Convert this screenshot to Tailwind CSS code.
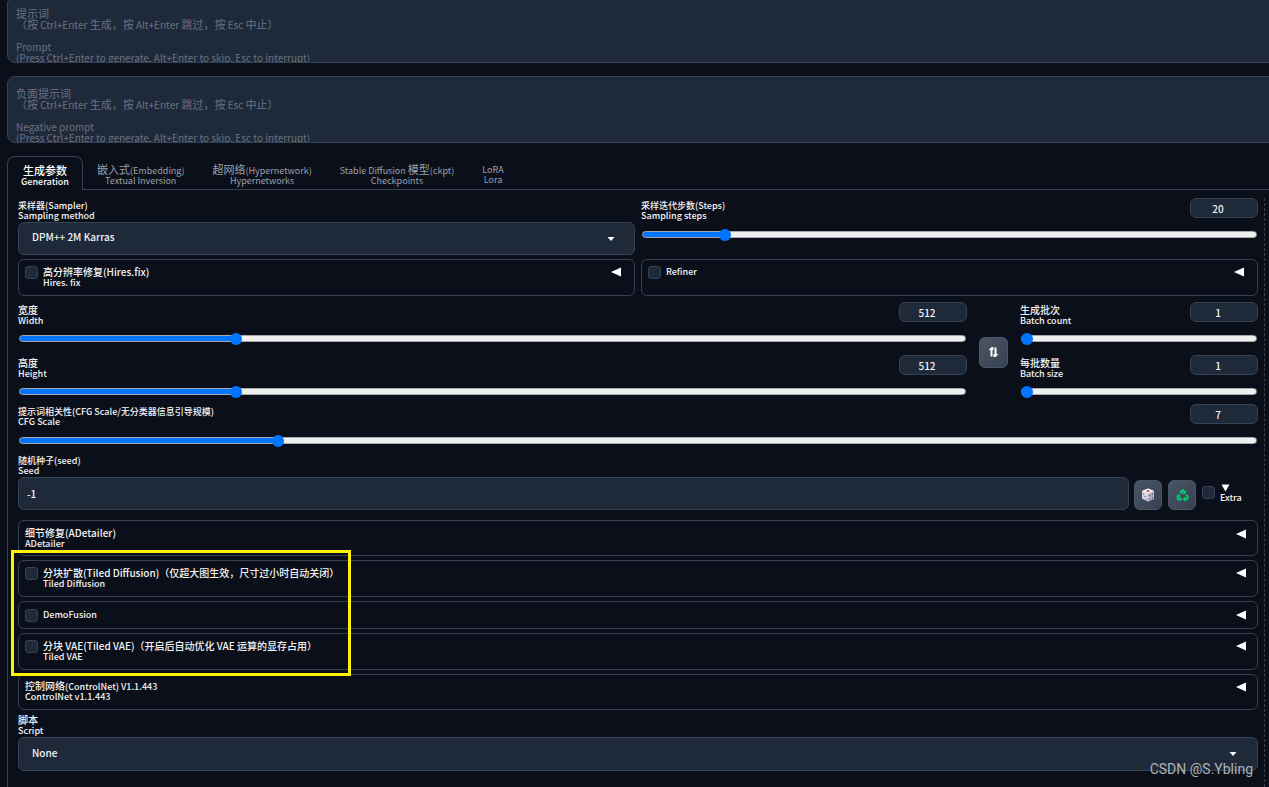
<!DOCTYPE html>
<html lang="zh-CN">
<head>
<meta charset="utf-8">
<title>Stable Diffusion</title>
<script src="https://cdn.jsdelivr.net/npm/@tailwindcss/browser@4"></script>
</head>
<body class="relative min-h-screen overflow-hidden bg-[#0b0f19] font-['Noto_Sans_CJK_SC',sans-serif] text-[9px] leading-[10px] font-medium text-gray-100">
<div class="flex min-h-screen flex-col pl-[7px]">

  <section class="-mt-1 -mr-2 flex flex-col gap-[13px]">
    <div class="relative h-[67px] overflow-hidden rounded-lg border border-gray-700 bg-gray-800">
      <textarea id="prompt" class="block size-full resize-none bg-transparent px-2 pt-[11px] text-[11px] leading-[11px]"></textarea>
      <label for="prompt" class="pointer-events-none absolute inset-x-2 top-[11px] text-[10px] leading-[11px] font-normal text-gray-500 [&_span]:text-[11px]">
        <span>提示词</span><br><span>（按</span> Ctrl+Enter <span>生成，按</span> Alt+Enter <span>跳过，按</span> Esc <span>中止）</span><br><br>Prompt<br>(Press Ctrl+Enter to generate, Alt+Enter to skip, Esc to interrupt)
      </label>
    </div>
    <div class="relative h-[67px] overflow-hidden rounded-lg border border-gray-700 bg-gray-800">
      <textarea id="negative" class="block size-full resize-none bg-transparent px-2 pt-[11px] text-[11px] leading-[11px]"></textarea>
      <label for="negative" class="pointer-events-none absolute inset-x-2 top-[11px] text-[10px] leading-[11px] font-normal text-gray-500 [&_span]:text-[11px]">
        <span>负面提示词</span><br><span>（按</span> Ctrl+Enter <span>生成，按</span> Alt+Enter <span>跳过，按</span> Esc <span>中止）</span><br><br>Negative prompt<br>(Press Ctrl+Enter to generate, Alt+Enter to skip, Esc to interrupt)
      </label>
    </div>
  </section>

  <nav class="mt-[13px] flex h-[34px] font-normal text-gray-400 [&_span]:text-[11px]">
    <button class="w-[76px] rounded-t-lg border border-b-0 border-gray-700 pt-1 text-center font-medium text-white"><span>生成参数</span><br>Generation</button>
    <button class="border-b border-gray-700 px-[14px] pt-[5px] text-center"><span>嵌入式</span>(Embedding)<br>Textual Inversion</button>
    <button class="border-b border-gray-700 px-[14px] pt-[5px] text-center"><span>超网络</span>(Hypernetwork)<br>Hypernetworks</button>
    <button class="border-b border-gray-700 px-[14px] pt-[5px] text-center">Stable Diffusion <span>模型</span>(ckpt)<br>Checkpoints</button>
    <button class="border-b border-gray-700 px-[14px] pt-[5px] text-center">LoRA<br>Lora</button>
    <div class="flex-1 border-b border-gray-700"></div>
  </nav>

  <main class="flex flex-1 border-l border-gray-700 pt-2 pr-1 pl-[10px] [&_input::-webkit-slider-runnable-track]:h-[7px] [&_input::-webkit-slider-runnable-track]:rounded-full [&_input::-webkit-slider-runnable-track]:border [&_input::-webkit-slider-runnable-track]:border-[#a5a7aa] [&_input::-webkit-slider-runnable-track]:bg-[linear-gradient(to_right,#0075ff_var(--fill),#efefef_var(--fill))] [&_input::-webkit-slider-thumb]:-mt-[3px] [&_input::-webkit-slider-thumb]:-ml-px [&_input::-webkit-slider-thumb]:size-3 [&_input::-webkit-slider-thumb]:appearance-none [&_input::-webkit-slider-thumb]:rounded-full [&_input::-webkit-slider-thumb]:bg-[#0075ff]">
    <div class="min-w-0 flex-1 border-r border-dashed border-gray-700 pr-[6px]">

      <div class="grid grid-cols-2 gap-x-[6px] gap-y-1">
        <div>
          <label for="sampler" class="mb-[1px] block pt-[3px]">采样器(Sampler)<br>Sampling method</label>
          <div class="relative">
            <select id="sampler" class="h-[33px] w-full appearance-none rounded-md border border-gray-700 bg-gray-800 px-[13px] pb-1 text-[10px]"><option>DPM++ 2M Karras</option></select>
            <svg class="pointer-events-none absolute top-[15px] right-5 h-1 w-2" viewBox="0 0 8 4" fill="#fff"><path d="M0.5 0h7L4 4z"/></svg>
          </div>
        </div>
        <div class="flex flex-col gap-[10px]">
          <div class="flex h-5 items-start justify-between">
            <label for="steps" class="pt-[3px]">采样迭代步数(Steps)<br>Sampling steps</label>
            <input aria-label="Sampling steps value" value="20" class="h-5 w-[68px] rounded-md border border-gray-700 bg-gray-800 pr-3 text-center text-[10px]">
          </div>
          <input id="steps" type="range" min="1" max="150" value="20" class="h-3 w-full appearance-none bg-transparent px-px" style="--fill:13.5%">
        </div>
        <details class="rounded-md border border-gray-700">
          <summary class="flex min-h-[35px] list-none items-start px-[6px] pt-[7px]">
            <input id="hires" type="checkbox" class="mr-[5px] -mt-px size-[13px] appearance-none rounded-[3px] border border-gray-700 bg-gray-800">
            <label for="hires" class="flex-1"><span class="text-[10px]">高分辨率修复(Hires.fix)</span><br>Hires. fix</label>
            <svg class="mr-[7px] h-[10px] w-[10px]" viewBox="0 0 10 10" fill="#fff"><path d="M0 5L10 0.5v9z"/></svg>
          </summary>
        </details>
        <details class="rounded-md border border-gray-700">
          <summary class="flex min-h-[35px] list-none items-start px-[6px] pt-[7px]">
            <input id="refiner" type="checkbox" class="mr-[5px] -mt-px size-[13px] appearance-none rounded-[3px] border border-gray-700 bg-gray-800">
            <label for="refiner" class="flex-1">Refiner</label>
            <svg class="mr-[7px] h-[10px] w-[10px]" viewBox="0 0 10 10" fill="#fff"><path d="M0 5L10 0.5v9z"/></svg>
          </summary>
        </details>
      </div>

      <div class="mt-[6px] flex items-center gap-3">
        <div class="flex flex-1 flex-col gap-[11px]">
          <div class="flex flex-col gap-[10px]">
            <div class="flex h-5 items-start justify-between">
              <label for="width" class="pt-[3px]"><span class="text-[10px]">宽度</span><br>Width</label>
              <input aria-label="Width value" value="512" class="h-5 w-[68px] rounded-md border border-gray-700 bg-gray-800 pr-3 text-center text-[10px]">
            </div>
            <input id="width" type="range" min="64" max="2048" value="512" class="h-3 w-full appearance-none bg-transparent px-px" style="--fill:23%">
          </div>
          <div class="flex flex-col gap-[10px]">
            <div class="flex h-5 items-start justify-between">
              <label for="height" class="pt-[3px]"><span class="text-[10px]">高度</span><br>Height</label>
              <input aria-label="Height value" value="512" class="h-5 w-[68px] rounded-md border border-gray-700 bg-gray-800 pr-3 text-center text-[10px]">
            </div>
            <input id="height" type="range" min="64" max="2048" value="512" class="h-3 w-full appearance-none bg-transparent px-px" style="--fill:23%">
          </div>
        </div>
        <button aria-label="交换宽高" class="mt-[5px] flex h-[31px] w-[29px] items-center justify-center rounded-md border border-gray-600 bg-linear-to-br from-gray-600 to-gray-700">
          <svg class="h-[10px] w-[11px]" viewBox="0 0 11 10" fill="none" stroke="#fff" stroke-width="2"><path d="M3.500 9.500V1.500M7.500 .5V8.500"/><path d="M.5 3L3.500 0H5.500V3zM5.500 7V10H7.500L10.500 7z" fill="#fff" stroke="none"/></svg>
        </button>
        <div class="flex w-[238px] flex-col gap-[11px]">
          <div class="flex flex-col gap-[10px]">
            <div class="flex h-5 items-start justify-between">
              <label for="count" class="pt-[3px]"><span class="text-[10px]">生成批次</span><br>Batch count</label>
              <input aria-label="Batch count value" value="1" class="h-5 w-[68px] rounded-md border border-gray-700 bg-gray-800 pr-3 text-center text-[10px]">
            </div>
            <input id="count" type="range" min="1" max="100" value="1" class="h-3 w-full appearance-none bg-transparent px-px" style="--fill:2%">
          </div>
          <div class="flex flex-col gap-[10px]">
            <div class="flex h-5 items-start justify-between">
              <label for="size" class="pt-[3px]"><span class="text-[10px]">每批数量</span><br>Batch size</label>
              <input aria-label="Batch size value" value="1" class="h-5 w-[68px] rounded-md border border-gray-700 bg-gray-800 pr-3 text-center text-[10px]">
            </div>
            <input id="size" type="range" min="1" max="8" value="1" class="h-3 w-full appearance-none bg-transparent px-px" style="--fill:2%">
          </div>
        </div>
      </div>

      <div class="mt-[7px] flex flex-col gap-[10px]">
        <div class="flex h-5 items-start justify-between">
          <label for="cfg" class="pt-[3px]">提示词相关性(CFG Scale/无分类器信息引导规模)<br>CFG Scale</label>
          <input aria-label="CFG Scale value" value="7" class="h-5 w-[68px] rounded-md border border-gray-700 bg-gray-800 pr-3 text-center text-[10px]">
        </div>
        <input id="cfg" type="range" min="1" max="30" step="0.5" value="7" class="h-3 w-full appearance-none bg-transparent px-px" style="--fill:21%">
      </div>

      <label for="seed" class="mt-[10px] block">随机种子(seed)<br>Seed</label>
      <div class="mt-px flex h-[33px] items-end">
        <input id="seed" value="-1" class="mr-[5px] h-full min-w-0 flex-1 rounded-md border border-gray-700 bg-gray-800 px-2 text-[10px]">
        <button aria-label="随机种子" class="mr-[6px] flex h-[30px] w-7 items-center justify-center rounded-md border border-gray-600 bg-linear-to-br from-gray-600 to-gray-700">
          <svg class="size-[14px]" viewBox="0 0 14 14"><path d="M7 .5L13 3v7.500L7 13.500 1 10.500V3z" fill="#d9d4e0"/><path d="M7 .5L13 3 7 5.800 1 3z" fill="#f7f4f8"/><path d="M7 5.800L13 3v7.500L7 13.500z" fill="#b6afc4"/><ellipse cx="7" cy="3" rx="1.700" ry=".9" fill="#d8434e"/><g fill="#39304d"><circle cx="2.600" cy="6" r=".6"/><circle cx="4" cy="8.500" r=".6"/><circle cx="5.500" cy="11" r=".6"/><circle cx="8.700" cy="7.500" r=".6"/><circle cx="11.500" cy="6" r=".6"/><circle cx="8.700" cy="11" r=".6"/><circle cx="11.500" cy="9.500" r=".6"/></g></svg>
        </button>
        <button aria-label="重用种子" class="mr-[6px] flex h-[30px] w-7 items-center justify-center rounded-md border border-gray-600 bg-linear-to-br from-gray-600 to-gray-700">
          <svg class="size-[13px]" viewBox="0 0 14 14" fill="#00cc6a"><path d="M3.700 4.200L5.400 1.200Q5.900.5 6.700.5H8.500L6 5.500z"/><path d="M7.600.5H8.200Q8.900.5 9.300 1.200L10.200 2.800 11.300 2.200 9.900 5.700 6.500 5 7.700 4.300z"/><path d="M10.200 6.800L12.200 5.700 13.700 8.400Q14 9.200 13.600 9.900L12.700 11.400z"/><path d="M12.300 11.900Q11.900 12.500 11.200 12.500H9.600V13.800L7.200 11 9.600 8.200V9.500H11.500z"/><path d="M6.200 9.500V12.500H2.700Q1.800 12.500 1.400 11.800L.9 10.900 1.800 9.500z"/><path d="M.6 10.200Q.1 9.500.5 8.600L1.400 7 .3 6.300 3.800 5.700 5 9 3.900 8.400 3.100 9.800z"/></svg>
        </button>
        <div class="flex w-14 self-center pb-[2px]">
          <input id="extra" type="checkbox" class="mt-[3px] mr-[5px] size-[13px] appearance-none rounded-[3px] border border-gray-700 bg-gray-800">
          <label for="extra"><svg class="mt-px mb-px ml-px h-[8px] w-[9px]" viewBox="0 0 9 8" fill="#fff"><path d="M.5 .5h8L4.500 7.500z"/></svg>Extra</label>
        </div>
      </div>

      <div class="mt-[10px] flex flex-col gap-1">
        <details class="rounded-md border border-gray-700">
          <summary class="flex min-h-[34px] list-none items-start px-[6px] pt-[7px]">
            <span class="flex-1"><span class="text-[10px]">细节修复(ADetailer)</span><br>ADetailer</span>
            <svg class="mt-px mr-[5px] h-[10px] w-[10px]" viewBox="0 0 10 10" fill="#fff"><path d="M0 5L10 0.5v9z"/></svg>
          </summary>
        </details>
        <div class="relative flex flex-col gap-1">
          <details class="rounded-md border border-gray-700">
            <summary class="flex min-h-[35px] list-none items-start px-[6px] pt-[7px]">
              <input id="tdiff" type="checkbox" class="mr-[5px] -mt-px size-[13px] appearance-none rounded-[3px] border border-gray-700 bg-gray-800">
              <label for="tdiff" class="flex-1"><span class="text-[10px]">分块扩散(Tiled Diffusion)（仅超大图生效，尺寸过小时自动关闭）</span><br>Tiled Diffusion</label>
              <svg class="mr-[5px] h-[10px] w-[10px]" viewBox="0 0 10 10" fill="#fff"><path d="M0 5L10 0.5v9z"/></svg>
            </summary>
          </details>
          <details class="rounded-md border border-gray-700">
            <summary class="flex min-h-[26px] list-none items-start px-[6px] pt-[8px]">
              <input id="demo" type="checkbox" class="mr-[5px] -mt-px size-[13px] appearance-none rounded-[3px] border border-gray-700 bg-gray-800">
              <label for="demo" class="flex-1">DemoFusion</label>
              <svg class="mr-[5px] h-[10px] w-[10px]" viewBox="0 0 10 10" fill="#fff"><path d="M0 5L10 0.5v9z"/></svg>
            </summary>
          </details>
          <details class="rounded-md border border-gray-700">
            <summary class="flex min-h-[35px] list-none items-start px-[6px] pt-[7px]">
              <input id="tvae" type="checkbox" class="mr-[5px] -mt-px size-[13px] appearance-none rounded-[3px] border border-gray-700 bg-gray-800">
              <label for="tvae" class="flex-1"><span class="text-[10px]">分块 VAE(Tiled VAE)（开启后自动优化 VAE 运算的显存占用）</span><br>Tiled VAE</label>
              <svg class="mr-[5px] h-[10px] w-[10px]" viewBox="0 0 10 10" fill="#fff"><path d="M0 5L10 0.5v9z"/></svg>
            </summary>
          </details>
          <div class="pointer-events-none absolute -top-[10px] -bottom-[6px] -left-[7px] z-10 w-[340px] border-3 border-[#fff200]"></div>
        </div>
        <details class="rounded-md border border-gray-700">
          <summary class="flex min-h-[34px] list-none items-start px-[6px] pt-[6px]">
            <span class="flex-1"><span class="text-[10px]">控制网络</span>(ControlNet) V1.1.443<br>ControlNet v1.1.443</span>
            <svg class="mt-px mr-[5px] h-[10px] w-[10px]" viewBox="0 0 10 10" fill="#fff"><path d="M0 5L10 0.5v9z"/></svg>
          </summary>
        </details>
      </div>

      <label for="script" class="mt-[5px] mb-px block"><span class="text-[10px]">脚本</span><br>Script</label>
      <div class="relative">
        <select id="script" class="h-[34px] w-full appearance-none rounded-md border border-gray-700 bg-gray-800 px-[13px] pb-[2px] text-[10px]"><option>None</option></select>
        <svg class="pointer-events-none absolute top-[15px] right-[21px] h-1 w-2" viewBox="0 0 8 4" fill="#fff"><path d="M0.5 0h7L4 4z"/></svg>
      </div>
    </div>
  </main>
</div>
<div class="absolute right-4 bottom-[9px] font-[Roboto,sans-serif] text-[14px] leading-[18px] font-normal text-[#aeb1b6]">CSDN @S.Ybling</div>
</body>
</html>
